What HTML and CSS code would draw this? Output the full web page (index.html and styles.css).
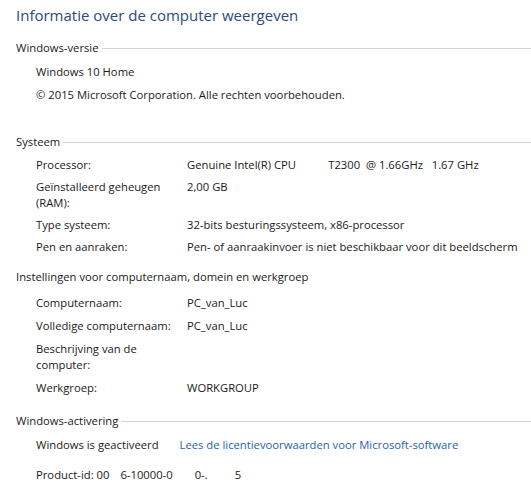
FILE: index.html
```html
<!DOCTYPE html>
<html>
<head>
<meta charset="utf-8">
<link rel="stylesheet" href="styles.css">
</head>
<body>
<div class="page">
  <h1 class="title">Informatie over de computer weergeven</h1>

  <section class="group g-version">
    <div class="group-head"><span>Windows-versie</span><i class="rule"></i></div>
    <div class="lines">
      <div class="line">Windows 10 Home</div>
      <div class="line">© 2015 Microsoft Corporation. Alle rechten voorbehouden.</div>
    </div>
  </section>

  <section class="group g-system">
    <div class="group-head"><span>Systeem</span><i class="rule"></i></div>
    <div class="grid">
      <div class="lbl">Processor:</div><div class="val">Genuine Intel(R) CPU&nbsp;&nbsp;&nbsp;&nbsp;&nbsp;&nbsp;&nbsp;&nbsp;&nbsp;&nbsp;&nbsp;T2300&nbsp; @ 1.66GHz&nbsp;&nbsp; 1.67 GHz</div>
      <div class="lbl">Geïnstalleerd geheugen<br>(RAM):</div><div class="val">2,00 GB</div>
      <div class="lbl">Type systeem:</div><div class="val">32-bits besturingssysteem, x86-processor</div>
      <div class="lbl">Pen en aanraken:</div><div class="val">Pen- of aanraakinvoer is niet beschikbaar voor dit beeldscherm</div>
    </div>
  </section>

  <section class="group g-name">
    <div class="group-head"><span>Instellingen voor computernaam, domein en werkgroep</span></div>
    <div class="grid">
      <div class="lbl">Computernaam:</div><div class="val">PC_van_Luc</div>
      <div class="lbl">Volledige computernaam:</div><div class="val">PC_van_Luc</div>
      <div class="lbl">Beschrijving van de<br>computer:</div><div class="val"></div>
      <div class="lbl">Werkgroep:</div><div class="val">WORKGROUP</div>
    </div>
  </section>

  <section class="group g-act">
    <div class="group-head"><span>Windows-activering</span><i class="rule"></i></div>
    <div class="lines">
      <div class="line">Windows is geactiveerd<span class="gap"></span><a class="link" href="#">Lees de licentievoorwaarden voor Microsoft-software</a></div>
      <div class="line product">Product-id: 00<span class="p1"></span>6-10000-0<span class="p2"></span>0-.<span class="p3"></span>5</div>
    </div>
  </section>
</div>
</body>
</html>
```

FILE: styles.css
```css
html, body {
  margin: 0;
  padding: 0;
  background: #ffffff;
}
.page {
  font-family: "Open Sans", "Noto Sans", sans-serif;
  font-size: 11.25px;
  color: #1a1a1a;
  padding: 4px 0 0 16px;
  overflow: hidden;
}
.title {
  font-weight: 400;
  font-size: 15px;
  color: #2a4b7c;
  margin: 0 0 14px 0;
  line-height: 22px;
}
.group-head {
  display: flex;
  align-items: center;
  line-height: 16px;
}
.rule {
  flex: 1;
  height: 1px;
  background: #d2d2d2;
  margin-left: 3px;
}
.lines {
  padding-left: 20px;
  margin-top: 8px;
  display: flex;
  flex-direction: column;
  gap: 7px;
}
.line {
  line-height: 16px;
  white-space: nowrap;
}
.grid {
  display: grid;
  grid-template-columns: 151px 1fr;
  row-gap: 6px;
  padding-left: 20px;
  margin-top: 7px;
  line-height: 16px;
  white-space: nowrap;
}
.g-version { margin-bottom: 31px; }
.g-system { margin-bottom: 14px; }
.g-name { margin-bottom: 17px; }
.g-name .grid { margin-top: 10px; row-gap: 7px; }
.link {
  color: #1f63ad;
  text-decoration: none;
}
.gap { display: inline-block; width: 21px; }
.p1 { display: inline-block; width: 11px; }
.p2 { display: inline-block; width: 22px; }
.p3 { display: inline-block; width: 27px; }
.product { margin-top: 7px; }
```
